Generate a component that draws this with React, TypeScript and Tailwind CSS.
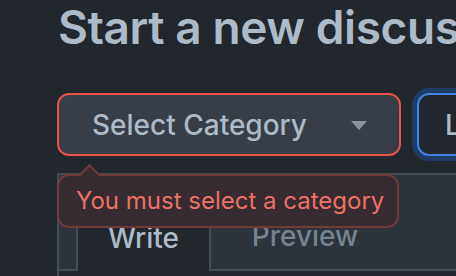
const font = { fontFamily: "Inter, 'Noto Sans', sans-serif" };

const App = () => {
	return (
		<div
			className="h-[276px] w-[456px] overflow-hidden bg-[#22272e] pl-[57px] pt-[1px]"
			style={font}
		>
			<h1 className="ml-[1px] mt-[1px] whitespace-nowrap text-[46px] font-semibold leading-[50px] tracking-[-0.4px] text-[#adbac7]">
				Start a new discussion
			</h1>

			<div className="mt-[41px] flex items-center gap-[16px]">
				<button className="flex h-[63px] w-[344px] shrink-0 items-center justify-between rounded-[12px] border-2 border-[#e5534b] bg-[#373e47] pl-[33px] pr-[32px]">
					<span className="text-[28px] font-medium text-[#adbac7]">
						Select Category
					</span>
					<svg width="16" height="9" viewBox="0 0 16 9" className="mt-[2px]">
						<path d="M0 0h16L8 9z" fill="#8b949e" />
					</svg>
				</button>
				<button className="flex h-[63px] w-[120px] shrink-0 items-center rounded-[12px] border-2 border-[#4184e4] bg-[#22272e] pl-[26px] shadow-[0_0_0_5px_#1e3a66]">
					<span className="text-[28px] font-medium text-[#adbac7]">Labels</span>
				</button>
			</div>

			<div className="relative mt-[17px]">
				<div className="border-l-2 border-t-2 border-[#444c56]">
					<div className="flex h-[96px] items-end border-b-2 border-[#444c56] bg-[#2d333b] pl-[17px]">
						<div className="-mb-[2px] flex h-[74px] w-[135px] items-center justify-center border-x-2 border-t-2 border-[#444c56] bg-[#22272e] pt-[6px] text-[28px] font-medium text-[#adbac7]">
							Write
						</div>
						<div className="flex h-[72px] w-[188px] items-center justify-center pt-[6px] text-[28px] font-medium text-[#768390]">
							Preview
						</div>
					</div>
					<div className="h-[20px] bg-[#22272e]" />
				</div>

				{/* validation tooltip */}
				<div className="absolute left-0 top-[1px] h-[54px] w-[342px] rounded-[12px] border-2 border-[#6f3a38] bg-[#362b30]">
					<div className="absolute left-[23px] top-[-9px] h-[15px] w-[15px] rotate-45 border-l-2 border-t-2 border-[#6f3a38] bg-[#362b30]" />
					<p className="relative pl-[17px] pt-[10px] text-[24px] leading-[30px] text-[#ec7166]">
						You must select a category
					</p>
				</div>
			</div>
		</div>
	);
};

export default App;
